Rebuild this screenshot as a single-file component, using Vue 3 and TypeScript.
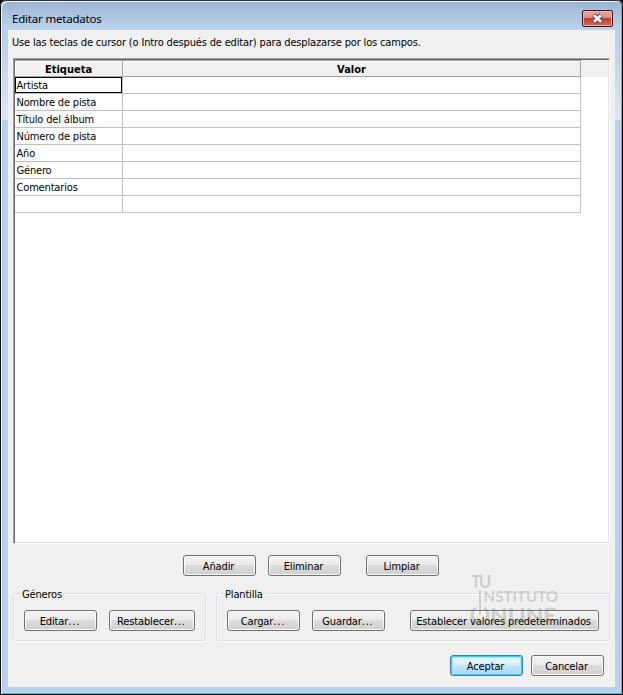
<script setup lang="ts">
const fields: string[] = ['Artista', 'Nombre de pista', 'Título del álbum', 'Número de pista', 'Año', 'Género', 'Comentarios', '']
</script>

<template>
  <div class="window">
    <header class="titlebar">
      <span class="title">Editar metadatos</span>
      <button class="close" aria-label="Cerrar">
        <svg width="13" height="11" viewBox="0 0 13 11">
          <path d="M2.8 2 L10.2 9 M10.2 2 L2.8 9" stroke="#54506a" stroke-width="4.8" fill="none" />
          <path d="M3 2.200 L10 8.800 M10 2.200 L3 8.800" stroke="#f4f4f6" stroke-width="2.6" fill="none" />
        </svg>
      </button>
    </header>
    <main class="client">
      <p class="hint">Use las teclas de cursor (o Intro después de editar) para desplazarse por los campos.</p>
      <div class="grid">
        <div class="grid-head">
          <div class="h tag"><span>Etiqueta</span></div>
          <div class="h value"><span>Valor</span></div>
        </div>
        <div v-for="(f, i) in fields" :key="i" class="row">
          <div class="cell tag" :class="{ selected: i === 0 }"><span>{{ f }}</span></div>
          <div class="cell value"></div>
        </div>
      </div>
      <div class="actions">
        <button class="btn">Añadir</button>
        <button class="btn">Eliminar</button>
        <button class="btn far">Limpiar</button>
      </div>
      <div class="groups">
        <section class="group genres">
          <h2>Géneros</h2>
          <button class="btn">Editar<span class="dots">...</span></button>
          <button class="btn restore">Restablecer<span class="dots">...</span></button>
        </section>
        <section class="group template">
          <h2>Plantilla</h2>
          <button class="btn">Cargar<span class="dots">...</span></button>
          <button class="btn">Guardar<span class="dots">...</span></button>
          <button class="btn defaults">Establecer valores predeterminados</button>
        </section>
      </div>
      <footer class="footer">
        <button class="btn primary">Aceptar</button>
        <button class="btn">Cancelar</button>
      </footer>
    </main>
    <svg class="watermark" width="100" height="64" viewBox="0 0 100 64">
      <g fill="#777" font-family="Lato, sans-serif" font-weight="700">
        <text x="6" y="18" font-size="16.500" textLength="20">TU</text>
        <text x="18.500" y="31.500" font-size="15" textLength="74.500">NSTITUTO</text>
        <text x="25" y="52.500" font-size="21.500" font-weight="900" textLength="66" lengthAdjust="spacingAndGlyphs">NLINE</text>
      </g>
      <path d="M15 20V45" stroke="#777" stroke-width="2" />
      <path d="M11 38A7.800 7.800 0 1 0 19 38" stroke="#777" stroke-width="3" fill="none" />
    </svg>
  </div>
</template>

<style>
body { margin: 0; background: #000; overflow: hidden; }
</style>

<style scoped>
* { box-sizing: border-box; }
.window {
  position: relative;
  width: 623px;
  height: 695px;
  padding: 2px 8px 8px;
  border-radius: 6px 6px 0 0;
  background: linear-gradient(#9ab4d2, #b9d1ea 28px, #b9d1ea 40px, #dbe7f5 119px, #b9d1ea 121px);
  box-shadow: inset 0 1px #302e35, inset 1px 0 #111, inset -1px -1px #000, inset 2px 2px #e9f2fa, inset -2px -2px #37c5dc;
  font: 11px/13px "DejaVu Sans Condensed", "DejaVu Sans", sans-serif;
  font-stretch: condensed;
  letter-spacing: -0.165px;
  color: #000;
}
.titlebar { height: 28px; padding: 8px 2px 0 4px; display: flex; justify-content: space-between; }
.title { font: 11.5px/18px "Noto Sans", sans-serif; letter-spacing: -0.2px; }
.close {
  width: 31px; height: 17px; padding: 0; display: grid; place-items: center;
  border: 1px solid #47101c; border-radius: 2px;
  box-shadow: inset 0 0 0 1px #eab2a8;
  background: linear-gradient(#e8a89f, #dc8d80 45%, #bd3f28 50%, #d0705a);
}
.client { height: 657px; padding: 0 5px; background: #f0f0f0; }
.hint { margin: 0 0 0 -1px; height: 28px; padding-top: 6px; white-space: nowrap; }
.grid {
  width: 597px; height: 486px; background: #fff;
  border: 1px solid; border-color: #a0a0a0 #fff #fff #a0a0a0;
  box-shadow: inset 1px 1px #696969, inset -1px -1px #e3e3e3;
  padding: 1px;
}
.grid-head { height: 17px; display: flex; background: #f0f0f0; font-weight: bold; text-align: center; letter-spacing: 0; }
.h { border: solid #a0a0a0; border-width: 1px 1px 1px 0; box-shadow: inset 1px 1px #fff; line-height: 17px; }
.tag { width: 108px; }
.value { width: 458px; }
.row { height: 17px; display: flex; }
.cell { border: solid #c0c0c0; border-width: 0 1px 1px 0; padding-left: 1.5px; line-height: 17px; white-space: nowrap; }
.selected { box-shadow: inset 0 0 0 1px #000; }
.actions { display: flex; gap: 12px; padding: 11px 0 0 170px; }
.btn {
  width: 73px; height: 21px; padding: 1px 2px 0 0; flex: none;
  border: 1px solid #707070; border-radius: 3px;
  background: linear-gradient(#f2f2f2, #ebebeb 49%, #dddddd 50%, #cfcfcf);
  box-shadow: inset 0 0 0 1px #fafafa;
  font: inherit; letter-spacing: -0.12px; color: #000; white-space: nowrap; line-height: 19px;
}
.dots { letter-spacing: 0.8px; margin-right: -0.8px; }
.far { margin-left: 13px; }
.groups { display: flex; gap: 10px; padding-top: 17px; }
.group {
  position: relative; height: 48px; display: flex; gap: 12px; padding: 16px 10px 0;
  border: 1px solid #d5dfe8; border-radius: 3px; box-shadow: inset 1px 1px #fff, 1px 1px #fff;
}
.group h2 { position: absolute; left: 7px; top: -6px; margin: 0; padding: 0 2px 0 1px; background: #f0f0f0; font: inherit; }
.genres { width: 193px; }
.template { width: 394px; }
.restore { width: 86px; }
.defaults { width: 189px; margin-left: 13px; }
.footer { display: flex; gap: 8px; justify-content: flex-end; padding: 14px 6px 0 0; }
.primary {
  border-color: #3c7fb1;
  background: linear-gradient(#eaf6fd, #d9f0fc 49%, #bee6fd 50%, #a7d9f5);
  box-shadow: inset 0 0 0 1px #35d0fa, inset 0 0 1px 2px #a5e6fb;
}
.watermark { position: absolute; left: 465px; top: 570px; opacity: 0.27; pointer-events: none; }
</style>
